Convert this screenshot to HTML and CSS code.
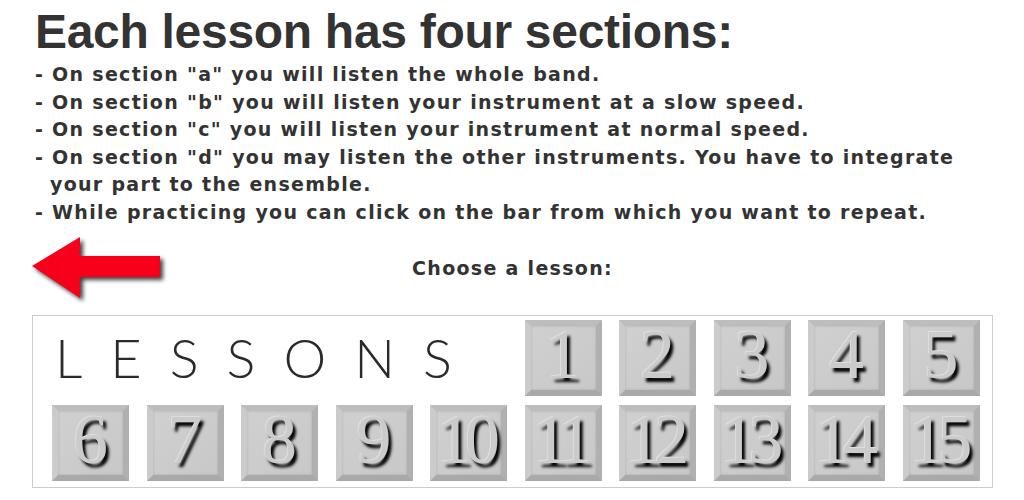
FILE: index.html
```html
<!DOCTYPE html>
<html lang="en">
<head>
    <meta charset="UTF-8">
    <title>Lessons</title>
    <link rel="stylesheet" href="styles.css">
</head>
<body>
    <div class="page">
        <h1>Each lesson has four sections:</h1>
        <ul class="notes">
            <li>- On section "a" you will listen the whole band.</li>
            <li>- On section "b" you will listen your instrument at a slow speed.</li>
            <li>- On section "c" you will listen your instrument at normal speed.</li>
            <li>- On section "d" you may listen the other instruments. You have to integrate<br><span class="indent">your part to the ensemble.</span></li>
            <li>- While practicing you can click on the bar from which you want to repeat.</li>
        </ul>

        <div class="choose-row">
            <svg class="back-arrow" width="136" height="66" viewBox="0 0 136 66">
                <polygon points="0,29 48,0 48,19 128,19 128,40 48,40 48,61" fill="#f6001b"/>
            </svg>
            <p class="choose">Choose a lesson:</p>
        </div>

        <div class="lessons-box">
            <div class="lessons-title">LESSONS</div>
            <a class="tile" href="#">1</a>
            <a class="tile" href="#">2</a>
            <a class="tile" href="#">3</a>
            <a class="tile" href="#">4</a>
            <a class="tile" href="#">5</a>
            <a class="tile" href="#">6</a>
            <a class="tile" href="#">7</a>
            <a class="tile" href="#">8</a>
            <a class="tile" href="#">9</a>
            <a class="tile" href="#">10</a>
            <a class="tile" href="#">11</a>
            <a class="tile" href="#">12</a>
            <a class="tile" href="#">13</a>
            <a class="tile" href="#">14</a>
            <a class="tile" href="#">15</a>
        </div>
    </div>
</body>
</html>
```

FILE: styles.css
```css
/* Reset */
* {
    margin: 0;
    padding: 0;
    box-sizing: border-box;
}

body {
    background: #fff;
    font-family: 'Liberation Sans', Arial, sans-serif;
    color: #333;
}

.page {
    padding: 8px 31px 0 32px;
}

/* Heading */
h1 {
    margin-left: 3px;
    font-size: 48px;
    line-height: 48px;
    font-weight: bold;
    letter-spacing: -0.3px;
    color: #333;
}

/* Instructions list */
.notes {
    list-style: none;
    margin: 5px 0 0 3px;
    font-family: 'DejaVu Sans', sans-serif;
    font-size: 19px;
    font-weight: bold;
    line-height: 27.6px;
    letter-spacing: 1.3px;
}

.notes .indent {
    padding-left: 15px;
}

/* Arrow + "Choose a lesson" */
.choose-row {
    display: grid;
    grid-template-columns: 1fr auto 1fr;
    margin-top: 10px;
    height: 62px;
}

.back-arrow {
    filter: drop-shadow(3px 3px 2px rgba(0, 0, 0, 0.75));
}

.choose {
    margin-top: 20px;
    font-family: 'DejaVu Sans', sans-serif;
    font-size: 19px;
    font-weight: bold;
    line-height: 22px;
    letter-spacing: 1.3px;
}

/* Lesson grid */
.lessons-box {
    display: grid;
    grid-template-columns: repeat(10, 77px);
    column-gap: 17.5px;
    row-gap: 9px;
    margin-top: 16px;
    padding: 4px 0 6px 19px;
    border: 1px solid #ccc;
}

.lessons-title {
    grid-column: 1 / 6;
    align-self: center;
    padding-left: 3px;
    font-family: 'Lato', 'Liberation Sans', sans-serif;
    font-weight: 300;
    font-size: 54px;
    letter-spacing: 28px;
    color: #2a2a2a;
}

.tile {
    display: flex;
    justify-content: center;
    align-items: flex-end;
    height: 76px;
    border: 6px solid;
    border-color: #bdbdbd #b0b0b0 #a9a9a9 #cbcbcb;
    background: linear-gradient(135deg, #d0d0d0, #c8c8c8);
    box-shadow: inset 0 0 3px rgba(0, 0, 0, 0.15);
    font-family: 'Liberation Serif', 'Times New Roman', serif;
    font-size: 70px;
    line-height: 70px;
    letter-spacing: -0.1em;
    text-indent: -0.1em;
    color: #cbcbcb;
    text-decoration: none;
    text-shadow: -1px -1px 0 #dedede, 3px 4px 3px #000;
}
```
